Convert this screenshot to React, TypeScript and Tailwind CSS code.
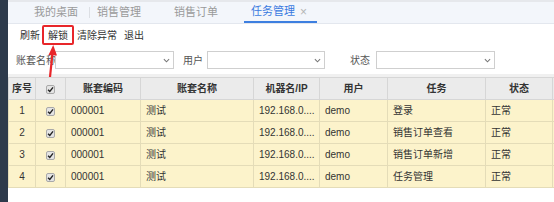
import React from 'react';

const cols = [
  { key: 'no', label: '序号', w: 27 },
  { key: 'ck', label: '', w: 30 },
  { key: 'code', label: '账套编码', w: 75 },
  { key: 'name', label: '账套名称', w: 113 },
  { key: 'ip', label: '机器名/IP', w: 66 },
  { key: 'user', label: '用户', w: 68 },
  { key: 'task', label: '任务', w: 98 },
  { key: 'state', label: '状态', w: 67 },
];

const rows = [
  { no: 1, code: '000001', name: '测试', ip: '192.168.0....', user: 'demo', task: '登录', state: '正常' },
  { no: 2, code: '000001', name: '测试', ip: '192.168.0....', user: 'demo', task: '销售订单查看', state: '正常' },
  { no: 3, code: '000001', name: '测试', ip: '192.168.0....', user: 'demo', task: '销售订单新增', state: '正常' },
  { no: 4, code: '000001', name: '测试', ip: '192.168.0....', user: 'demo', task: '任务管理', state: '正常' },
];

function Check() {
  return (
    <span className="inline-flex items-center justify-center w-[9px] h-[9px] rounded-[2px] border border-[#a9a9a9] bg-[#e4e4e4] align-middle">
      <svg width="7" height="7" viewBox="0 0 10 10">
        <path d="M1.5 5.2 L4 7.8 L8.6 2" fill="none" stroke="#222" strokeWidth="2" />
      </svg>
    </span>
  );
}

function Chevron() {
  return (
    <svg width="7" height="5" viewBox="0 0 8 5" className="mr-[3px]">
      <path d="M1 1 L4 4 L7 1" fill="none" stroke="#777" strokeWidth="1.2" />
    </svg>
  );
}

export default function App() {
  const font = { fontFamily: '"Liberation Sans", "Noto Sans CJK SC", sans-serif' };
  return (
    <div className="relative w-[554px] h-[202px] flex bg-white overflow-hidden text-[10px] text-[#333]" style={font}>
      <div className="w-[8px] shrink-0 bg-[#2d3a4b]" />
      <div className="flex-1 flex flex-col">
        {/* Tabs */}
        <div className="h-[2px] bg-[#e6e8ec]" />
        <div className="h-[22px] flex items-stretch bg-[#f3f6fb] border-b border-[#e3e7ee] text-[11px] text-[#9a9a9a]">
          <span className="ml-[26px] flex items-center">我的桌面</span>
          <span className="ml-[11px] my-[5px] w-px bg-[#dcdfe4]" />
          <span className="ml-[7px] flex items-center">销售管理</span>
          <span className="ml-[33px] flex items-center">销售订单</span>
          <span className="ml-[26px] flex items-center pl-[7px] pr-[10px] border-b-2 border-[#3d7fe0] text-[#3a7ae0]">
            任务管理
            <span className="ml-[5px] text-[12px] text-[#b5b5b5] leading-none">×</span>
          </span>
        </div>
        {/* Toolbar */}
        <div className="h-[22px] flex items-center">
          <span className="ml-[12px]">刷新</span>
          <span className="ml-[2px] px-[4px] h-[20px] flex items-center border-2 border-[#e8262a] rounded-[2px]">
            解锁
          </span>
          <span className="ml-[3px]">清除异常</span>
          <span className="ml-[7px]">退出</span>
        </div>
        {/* Filters */}
        <div className="h-[31px] flex items-center border-b-[3px] border-[#f0f0f0] text-[#555] whitespace-nowrap">
          <span className="ml-[8px] w-[39px] shrink-0">账套名称</span>
          <div className="relative w-[119px] h-[18px] border border-[#cfcfcf] bg-white flex items-center justify-end">
            <Chevron />
          </div>
          <span className="ml-[9px]">用户</span>
          <div className="ml-[4px] w-[118px] h-[18px] border border-[#cfcfcf] flex items-center justify-end">
            <Chevron />
          </div>
          <span className="ml-[25px]">状态</span>
          <div className="ml-[6px] w-[119px] h-[18px] border border-[#cfcfcf] flex items-center justify-end">
            <Chevron />
          </div>
        </div>
        {/* Table */}
        <table className="border-collapse table-fixed w-[546px]">
          <colgroup>
            {cols.map((c) => (
              <col key={c.key} style={{ width: c.w }} />
            ))}
            <col />
          </colgroup>
          <thead>
            <tr className="h-[22px] bg-[#ebebeb]">
              {cols.map((c) => (
                <th key={c.key} className="border border-[#d6d6d6] font-bold text-[10px] text-[#333] text-center p-0">
                  {c.key === 'ck' ? <Check /> : c.label}
                </th>
              ))}
              <th className="border-y border-[#d6d6d6]" />
            </tr>
          </thead>
          <tbody>
            {rows.map((r) => (
              <tr key={r.no} className="h-[22px] bg-[#fcf3cb]">
                <td className="border border-[#e4dcb8] text-center p-0">{r.no}</td>
                <td className="border border-[#e4dcb8] text-center p-0">
                  <Check />
                </td>
                <td className="border border-[#e4dcb8] pl-[5px]">{r.code}</td>
                <td className="border border-[#e4dcb8] pl-[5px]">{r.name}</td>
                <td className="border border-[#e4dcb8] pl-[5px]">{r.ip}</td>
                <td className="border border-[#e4dcb8] pl-[5px]">{r.user}</td>
                <td className="border border-[#e4dcb8] pl-[5px]">{r.task}</td>
                <td className="border border-[#e4dcb8] pl-[5px]">{r.state}</td>
                <td className="border-y border-[#e4dcb8]" />
              </tr>
            ))}
          </tbody>
        </table>
      </div>
      {/* annotation arrow */}
      <svg className="absolute left-0 top-0 pointer-events-none" width="554" height="202">
        <path d="M50 77 L52.5 53" stroke="#e8262a" strokeWidth="2.2" fill="none" />
        <path d="M53.2 45 L48.5 55 L57 55.5 Z" fill="#e8262a" />
      </svg>
    </div>
  );
}
